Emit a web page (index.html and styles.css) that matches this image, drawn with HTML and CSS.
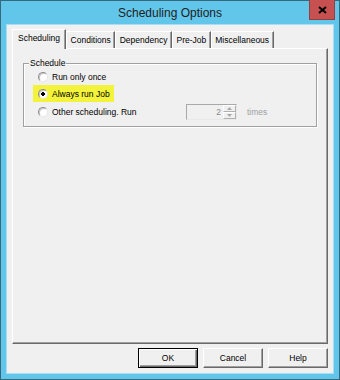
FILE: index.html
```html
<!DOCTYPE html>
<html>
<head>
<meta charset="utf-8">
<link rel="stylesheet" href="styles.css">
</head>
<body>
<div class="window">
  <div class="titlebar">
    <span></span>
    <span class="title">Scheduling Options</span>
    <div class="close">
      <svg width="9" height="8" viewBox="0 0 9 8"><path d="M1 1 L8 7 M8 1 L1 7" stroke="#000" stroke-width="2"/></svg>
    </div>
  </div>
  <div class="client">
    <div class="tabs">
      <div class="tab selected">Scheduling</div>
      <div class="tab">Conditions</div>
      <div class="tab">Dependency</div>
      <div class="tab">Pre-Job</div>
      <div class="tab">Miscellaneous</div>
    </div>
    <div class="panel">
      <fieldset class="group">
        <legend>Schedule</legend>
        <div class="opt"><span class="radio"></span><span>Run only once</span></div>
        <div class="opt hl"><span class="radio checked"></span><span>Always run Job</span></div>
        <div class="opt third">
          <span class="radio"></span><span class="run-label">Other scheduling. Run</span>
          <div class="spin">
            <span class="spin-val">2</span>
            <span class="spin-btns">
              <span class="sb"><svg width="5" height="3" viewBox="0 0 5 3"><path d="M0 3 L2.5 0 L5 3Z" fill="#a8a8a8"/></svg></span>
              <span class="sb"><svg width="5" height="3" viewBox="0 0 5 3"><path d="M0 0 L2.5 3 L5 0Z" fill="#a8a8a8"/></svg></span>
            </span>
          </div>
          <span class="times">times</span>
        </div>
      </fieldset>
    </div>
    <div class="buttons">
      <div class="btn default">OK</div>
      <div class="btn">Cancel</div>
      <div class="btn">Help</div>
    </div>
  </div>
</div>
</body>
</html>
```
FILE: styles.css
```css
body {
  margin: 0;
}
.window {
  width: 340px;
  height: 380px;
  box-sizing: border-box;
  border: 1px solid #35697c;
  background: #62c6ea;
  display: flex;
  flex-direction: column;
  font-family: "Liberation Sans", Arial, sans-serif;
}
.titlebar {
  height: 24px;
  display: grid;
  grid-template-columns: 1fr auto 1fr;
  align-items: start;
}
.title {
  font-size: 12px;
  line-height: 24px;
  color: #1e1e1e;
}
.close {
  justify-self: end;
  margin-top: -1px;
  margin-right: 4px;
  width: 26px;
  height: 20px;
  box-sizing: border-box;
  background: #c75050;
  border: 1px solid #94403f;
  border-top: none;
  display: flex;
  align-items: center;
  justify-content: center;
}
.client {
  flex: 1;
  margin: 0 6px 6px;
  background: #f0f0f0;
  box-shadow: 0 0 0 1px #a6def3;
  padding: 4px 5px 5px;
  display: flex;
  flex-direction: column;
}
.tabs {
  display: flex;
  align-items: flex-end;
  height: 19px;
}
.tab {
  font-size: 8.5px;
  line-height: 16px;
  height: 16px;
  padding: 0 3.5px;
  color: #000;
  border-top: 1px solid #fff;
  border-left: 1px solid #fff;
  border-right: 1px solid #696969;
  box-shadow: inset -1px 0 #a0a0a0;
  white-space: nowrap;
}
.tab.selected {
  position: relative;
  z-index: 1;
  height: 19px;
  margin-bottom: -1px;
  padding: 0 5px;
  background: #f0f0f0;
}
.panel {
  flex: 1;
  border: 1px solid;
  border-color: #fff #696969 #696969 #fff;
  box-shadow: inset -1px -1px #a0a0a0;
  padding: 9px 10px 0;
}
.group {
  margin: 0;
  padding: 1px 0 5px;
  border: 1px solid #a0a0a0;
  box-shadow: 1px 1px 0 #fff, inset 1px 1px 0 #fff;
  font-size: 8.5px;
}
.group legend {
  margin-left: 5px;
  padding: 0 1px;
  line-height: 10px;
  background: #f0f0f0;
}
.opt {
  display: flex;
  align-items: center;
  height: 16px;
  margin-left: 9px;
  padding-left: 5px;
  gap: 4px;
}
.opt.hl {
  height: 17px;
  width: fit-content;
  padding-right: 4px;
  background: #f3f33b;
}
.opt.third {
  height: 18px;
  margin-top: 1px;
}
.radio {
  flex: none;
  width: 10px;
  height: 10px;
  box-sizing: border-box;
  border-radius: 50%;
  border: 1px solid;
  border-color: #8e8e8e #e6e6e6 #e6e6e6 #8e8e8e;
  background: #fff;
  box-shadow: inset 1px 1px 0 #c4c4c4;
}
.radio.checked {
  background: radial-gradient(circle, #000 0 1.6px, #fff 2.1px);
}
.run-label {
  width: 130px;
}
.spin {
  display: flex;
  width: 51px;
  height: 16px;
  box-sizing: border-box;
  border: 1px solid;
  border-color: #a9a9a9 #e8e8e8 #e8e8e8 #a9a9a9;
  background: #f0f0f0;
}
.spin-val {
  flex: 1;
  text-align: right;
  color: #8a8a8a;
  line-height: 14px;
  padding-right: 2px;
}
.spin-btns {
  width: 13px;
  display: flex;
  flex-direction: column;
}
.sb {
  flex: 1;
  display: flex;
  align-items: center;
  justify-content: center;
  border: 1px solid;
  border-color: #fff #b0b0b0 #b0b0b0 #fff;
}
.times {
  margin-left: 6px;
  color: #a0a0a0;
}
.buttons {
  display: flex;
  justify-content: flex-end;
  gap: 5px;
  margin-top: 4px;
}
.btn {
  width: 60px;
  height: 20px;
  box-sizing: border-box;
  font-size: 8.5px;
  line-height: 18px;
  text-align: center;
  border: 1px solid;
  border-color: #fff #696969 #696969 #fff;
  box-shadow: inset -1px -1px #a0a0a0;
  background: #f0f0f0;
}
.btn.default {
  border-color: #000;
  box-shadow: inset 1px 1px #fff, inset -1px -1px #696969, inset -2px -2px #a0a0a0;
}
```
